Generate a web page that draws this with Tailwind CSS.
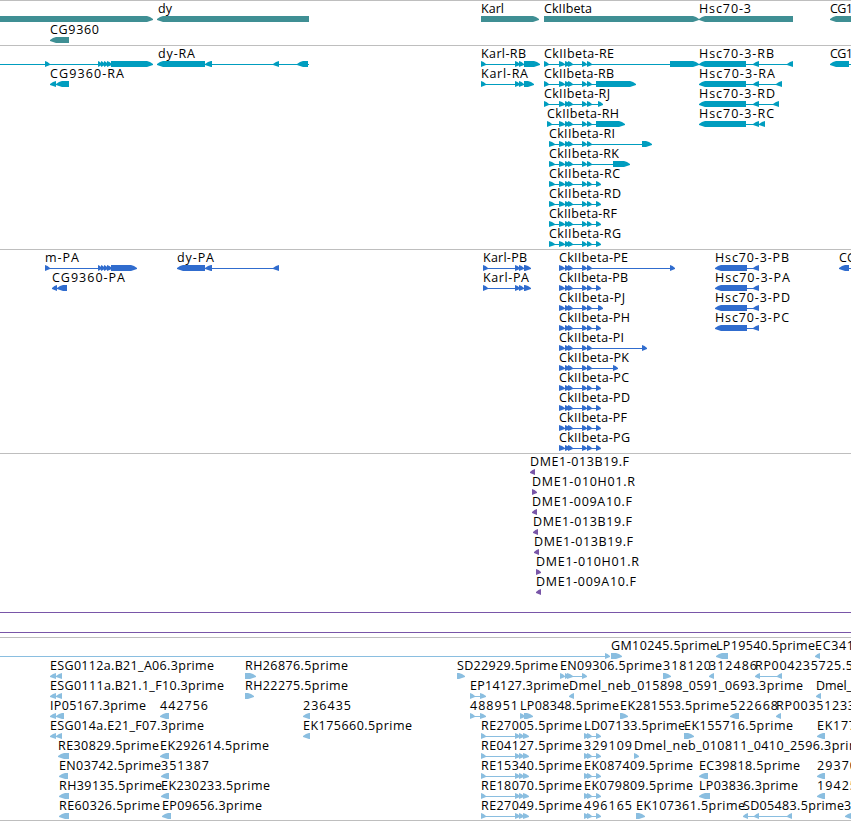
<!DOCTYPE html>
<html lang="en">
<head>
  <meta charset="UTF-8">
  <meta name="viewport" content="width=device-width, initial-scale=1.0">
  <title>Genome tracks</title>
  <script src="https://cdn.jsdelivr.net/npm/@tailwindcss/browser@4"></script>
</head>
<body class="bg-white overflow-hidden">
  <main class="flex flex-col w-[851px] h-[821px] border-b border-[#bebebe] font-['Open_Sans','Noto_Sans',sans-serif] text-[12.5px] text-black">
    <section class="h-[45px] border-t border-[#bebebe] text-[#3f8f94]">
      <svg id="genes" class="block w-full h-full fill-current"></svg>
    </section>
    <section class="h-[204px] border-t border-[#bebebe] text-[#009dbf]">
      <svg id="transcripts" class="block w-full h-full fill-current"></svg>
    </section>
    <section class="h-[204px] border-t border-[#bebebe] text-[#306cce]">
      <svg id="proteins" class="block w-full h-full fill-current"></svg>
    </section>
    <section class="h-[184px] border-t border-[#bebebe] text-[#7956a8]">
      <svg id="bacs" class="block w-full h-full fill-current"></svg>
    </section>
    <section class="h-[183px] border-t border-[#bebebe] text-[#8abee0]">
      <svg id="ests" class="block w-full h-full fill-current"></svg>
    </section>
  </main>

  <script>
    // feature: [row, label, label start, label end, direction, exons]
    const ck = [[559, 565], [565, 570], [568, 573], [582, 587], [587, 592]];
    const m = [[45, 50], [98, 102], [101, 105], [104, 108], [107, 112]];
    const re = [[481, 486], [515, 520], [519, 524], [523, 529]];
    const ld = [[584, 589], [587, 592], [596, 601]];

    const genes = [
      [0, "", 0, 0, ">", [[-10, 153]]],
      [0, "dy", 158, 172, "<", [[157, 309]]],
      [0, "Karl", 481, 504, ">", [[481, 539]]],
      [0, "CkIIbeta", 544, 592, ">", [[544, 699]]],
      [0, "Hsc70-3", 699, 751, "<", [[699, 793]]],
      [0, "CG1", 830, 853, "<", [[830, 870]]],
      [1, "CG9360", 50, 99, "<", [[50, 69]]],
    ];

    const transcripts = [
      [0, "", 0, 0, ">", [[-10, -5], ...m, [111, 153]]],
      [0, "dy-RA", 158, 195, "<", [[157, 205], [205, 212], [273, 279], [297, 308], [309, 309]]],
      [0, "Karl-RB", 481, 526, ">", [[481, 486], [515, 520], [519, 524], [524, 540]]],
      [0, "CkIIbeta-RE", 544, 614, ">", [[544, 549], ...ck, [670, 699]]],
      [0, "Hsc70-3-RB", 699, 774, "<", [[699, 746], [753, 759], [787, 793]]],
      [0, "CG1", 830, 853, "<", [[830, 849], [860, 865]]],
      [1, "CG9360-RA", 50, 124, "<", [[50, 56], [56, 69]]],
      [1, "Karl-RA", 481, 528, ">", [[481, 486], [515, 520], [519, 524], [524, 534]]],
      [1, "CkIIbeta-RB", 544, 614, ">", [[544, 549], ...ck, [596, 636]]],
      [1, "Hsc70-3-RA", 699, 775, "<", [[699, 746], [753, 759], [776, 782]]],
      [2, "CkIIbeta-RJ", 544, 610, ">", [[544, 549], ...ck, [598, 603]]],
      [2, "Hsc70-3-RD", 699, 775, "<", [[699, 746], [753, 759], [773, 779]]],
      [3, "CkIIbeta-RH", 547, 619, ">", [[547, 552], ...ck, [596, 625]]],
      [3, "Hsc70-3-RC", 699, 774, "<", [[699, 746], [753, 759], [759, 765]]],
      [4, "CkIIbeta-RI", 549, 615, ">", [[549, 555], ...ck, [642, 652]]],
      [5, "CkIIbeta-RK", 549, 619, ">", [[549, 555], ...ck, [613, 630]]],
      [6, "CkIIbeta-RC", 549, 620, ">", [[549, 555], ...ck, [596, 601]]],
      [7, "CkIIbeta-RD", 549, 621, ">", [[549, 555], ...ck, [596, 601]]],
      [8, "CkIIbeta-RF", 549, 617, ">", [[549, 555], ...ck, [596, 601]]],
      [9, "CkIIbeta-RG", 549, 621, ">", [[549, 555], ...ck, [596, 601]]],
    ];

    const proteins = [
      [0, "m-PA", 45, 79, ">", [...m, [111, 137]]],
      [0, "dy-PA", 177, 214, "<", [[177, 205], [205, 212], [273, 279]]],
      [0, "Karl-PB", 483, 527, ">", [[483, 488], [515, 520], [519, 524], [524, 531]]],
      [0, "CkIIbeta-PE", 559, 628, ">", [...ck, [670, 675]]],
      [0, "Hsc70-3-PB", 715, 789, "<", [[715, 747], [753, 759]]],
      [0, "CG", 839, 856, "<", [[839, 849], [860, 865]]],
      [1, "CG9360-PA", 52, 125, "<", [[52, 57], [57, 67]]],
      [1, "Karl-PA", 483, 529, ">", [[483, 488], [515, 520], [519, 524], [524, 531]]],
      [1, "CkIIbeta-PB", 559, 628, ">", [...ck, [596, 601]]],
      [1, "Hsc70-3-PA", 715, 790, "<", [[715, 747], [753, 759]]],
      [2, "CkIIbeta-PJ", 559, 625, ">", [...ck, [598, 603]]],
      [2, "Hsc70-3-PD", 715, 790, "<", [[715, 747], [753, 759]]],
      [3, "CkIIbeta-PH", 559, 630, ">", [...ck, [596, 601]]],
      [3, "Hsc70-3-PC", 715, 789, "<", [[715, 747], [753, 759]]],
      [4, "CkIIbeta-PI", 559, 624, ">", [...ck, [642, 647]]],
      [5, "CkIIbeta-PK", 559, 629, ">", [...ck, [613, 618]]],
      [6, "CkIIbeta-PC", 559, 629, ">", [...ck, [596, 601]]],
      [7, "CkIIbeta-PD", 559, 630, ">", [...ck, [596, 601]]],
      [8, "CkIIbeta-PF", 559, 627, ">", [...ck, [596, 601]]],
      [9, "CkIIbeta-PG", 559, 630, ">", [...ck, [596, 601]]],
    ];

    const bacs = [
      [0, "DME1-013B19.F", 530, 629, "<", [[530, 535]]],
      [1, "DME1-010H01.R", 532, 635, ">", [[532, 537]]],
      [2, "DME1-009A10.F", 532, 632, "<", [[532, 537]]],
      [3, "DME1-013B19.F", 533, 632, "<", [[533, 538]]],
      [4, "DME1-013B19.F", 534, 633, "<", [[534, 539]]],
      [5, "DME1-010H01.R", 536, 639, ">", [[536, 541]]],
      [6, "DME1-009A10.F", 536, 636, "<", [[536, 541]]],
      [7, "", 0, 0, ">", [[-10, -5], [860, 865]]],
      [8, "", 0, 0, ">", [[-10, -5], [860, 865]]],
    ];

    const ests = [
      [0, "", 0, 0, ">", [[-10, -5], [605, 610]]],
      [0, "GM10245.5prime", 611, 717, ">", [[611, 622]]],
      [0, "LP19540.5prime", 716, 815, "<", [[716, 728]]],
      [0, "EC341", 815, 854, "<", [[815, 820]]],
      [1, "ESG0112a.B21_A06.3prime", 50, 214, "<", [[50, 56], [56, 62]]],
      [1, "RH26876.5prime", 245, 348, ">", [[245, 256]]],
      [1, "SD22929.5prime", 457, 558, ">", [[457, 465]]],
      [1, "EN09306.5prime", 560, 662, ">", [[560, 565], [565, 569], [567, 573], [582, 587]]],
      [1, "318120", 663, 711, ">", [[663, 671]]],
      [1, "312486", 709, 757, "<", [[709, 714]]],
      [1, "RP004235725.5", 755, 853, "<", [[755, 760], [777, 782]]],
      [2, "ESG0111a.B21.1_F10.3prime", 50, 224, "<", [[50, 56], [56, 62]]],
      [2, "RH22275.5prime", 245, 348, ">", [[245, 254]]],
      [2, "EP14127.3prime", 470, 569, ">", [[470, 475], [480, 486]]],
      [2, "Dmel_neb_015898_0591_0693.3prime", 569, 803, "<", [[569, 574]]],
      [2, "Dmel_", 816, 852, "<", [[816, 821]]],
      [3, "IP05167.3prime", 50, 146, "<", [[50, 56], [56, 64]]],
      [3, "442756", 160, 208, "<", [[160, 169]]],
      [3, "236435", 303, 351, "<", [[303, 310]]],
      [3, "488951", 470, 518, ">", [[470, 475], [480, 486]]],
      [3, "LP08348.5prime", 520, 619, ">", [[520, 525], [524, 533]]],
      [3, "EK281553.5prime", 620, 729, ">", [[620, 628]]],
      [3, "522668", 730, 778, "<", [[730, 739]]],
      [3, "RP00351233", 776, 855, "<", [[776, 781]]],
      [4, "ESG014a.E21_F07.3prime", 50, 204, "<", [[50, 56], [56, 62]]],
      [4, "EK175660.5prime", 303, 412, "<", [[303, 310]]],
      [4, "RE27005.5prime", 481, 582, ">", re],
      [4, "LD07133.5prime", 584, 685, ">", ld],
      [4, "EK155716.5prime", 684, 793, ">", [[684, 694]]],
      [4, "EK177", 817, 856, "<", [[817, 825]]],
      [5, "RE30829.5prime", 58, 159, "<", [[58, 69]]],
      [5, "EK292614.5prime", 160, 269, "<", [[160, 169]]],
      [5, "RE04127.5prime", 481, 582, ">", re],
      [5, "329109", 584, 632, ">", ld],
      [5, "Dmel_neb_010811_0410_2596.3prime", 634, 868, ">", [[634, 639]]],
      [6, "EN03742.5prime", 59, 161, "<", [[59, 68]]],
      [6, "351387", 161, 209, "<", [[161, 169]]],
      [6, "RE15340.5prime", 481, 582, ">", re],
      [6, "EK087409.5prime", 584, 693, ">", ld],
      [6, "EC39818.5prime", 699, 800, "<", [[699, 708]]],
      [6, "29370", 817, 857, "<", [[817, 825]]],
      [7, "RH39135.5prime", 59, 162, "<", [[59, 69]]],
      [7, "EK230233.5prime", 161, 270, "<", [[161, 169]]],
      [7, "RE18070.5prime", 481, 582, ">", re],
      [7, "EK079809.5prime", 584, 693, ">", ld],
      [7, "LP03836.3prime", 699, 798, "<", [[699, 710]]],
      [7, "19425", 817, 857, "<", [[817, 825]]],
      [8, "RE60326.5prime", 59, 160, "<", [[59, 69]]],
      [8, "EP09656.3prime", 162, 262, "<", [[162, 171]]],
      [8, "RE27049.5prime", 481, 582, ">", re],
      [8, "496165", 584, 632, ">", ld],
      [8, "EK107361.5prime", 636, 745, ">", [[636, 645]]],
      [8, "SD05483.5prime", 743, 844, "<", [[743, 748], [754, 759], [787, 792]]],
      [8, "3", 844, 852, "<", [[845, 854]]],
    ];

    // exon with a pointed end in the reading direction
    function arrow(a, b, y, dir) {
      if (b - a < 1) return "";
      const tip = Math.min(6, b - a);
      if (dir === ">") {
        return `<polygon points="${a},${y} ${b - tip},${y} ${b - tip / 2},${y + 1} ${b},${y + 3} ${b},${y + 4} ${b - tip / 2},${y + 5} ${b - tip},${y + 6} ${a},${y + 6}"/>`;
      }
      return `<polygon points="${b},${y} ${a + tip},${y} ${a + tip / 2},${y + 1} ${a},${y + 3} ${a},${y + 4} ${a + tip / 2},${y + 5} ${a + tip},${y + 6} ${b},${y + 6}"/>`;
    }

    function drawTrack(id, features, pitch) {
      let out = "";
      for (const [row, label, x1, x2, dir, exons] of features) {
        const y = row * pitch + 15;
        const start = exons[0][0];
        const end = exons[exons.length - 1][1];
        if (exons.length > 1) {
          out += `<rect x="${start}" y="${y + 3}" width="${end - start}" height="1"/>`;
        }
        for (const [a, b] of exons) out += arrow(a, b, y, dir);
        if (label) {
          out += `<text class="fill-black" x="${x1}" y="${y - 3}" textLength="${x2 - x1}">${label}</text>`;
        }
      }
      document.getElementById(id).innerHTML = out;
    }

    drawTrack("genes", genes, 21);
    drawTrack("transcripts", transcripts, 20);
    drawTrack("proteins", proteins, 20);
    drawTrack("bacs", bacs, 20);
    drawTrack("ests", ests, 20);
  </script>
</body>
</html>
